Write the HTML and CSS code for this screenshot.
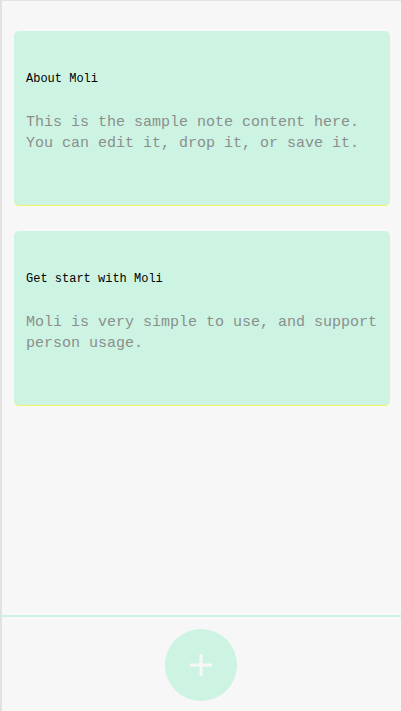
FILE: index.html
```html
<!DOCTYPE html>
<html>
<head>
<meta charset="utf-8">
<link rel="stylesheet" href="styles.css">
</head>
<body>
<div class="app">
  <main class="notes">
    <article class="note">
      <h2 class="note-title">About Moli</h2>
      <p class="note-body">This is the sample note content here. You can edit it, drop it, or save it.</p>
    </article>
    <article class="note">
      <h2 class="note-title">Get start with Moli</h2>
      <p class="note-body">Moli is very simple to use, and support person usage.</p>
    </article>
  </main>
  <footer class="bar">
    <button class="add" aria-label="Add note">
      <svg width="24" height="24" viewBox="0 0 24 24"><path d="M12 1v22M1 12h22" stroke="#f7f7f7" stroke-width="3" fill="none"/></svg>
    </button>
  </footer>
</div>
</body>
</html>
```

FILE: styles.css
```css
html, body {
  margin: 0;
  padding: 0;
  height: 100%;
}
body {
  background: #f7f7f7;
  font-family: "Liberation Mono", "DejaVu Sans Mono", monospace;
}
.app {
  box-sizing: border-box;
  height: 711px;
  border-left: 2px solid #e2e2e2;
  border-top: 1px solid #e2e2e2;
  display: flex;
  flex-direction: column;
}
.notes {
  flex: 1;
  padding: 30px 11px 0 12px;
  display: flex;
  flex-direction: column;
  gap: 25px;
}
.note {
  box-sizing: border-box;
  height: 175px;
  background: #cdf3e3;
  border-radius: 5px;
  border-bottom: 1px solid #ecf562;
  padding: 40px 12px 0 12px;
}
.note-title {
  margin: 0;
  font-size: 12px;
  font-weight: normal;
  line-height: 16px;
  color: #000;
}
.note-body {
  margin: 25px 0 0 0;
  font-size: 15px;
  line-height: 21px;
  color: #8a8f8c;
}
.bar {
  height: 96px;
  border-top: 2px solid #cdf3e3;
  display: flex;
  justify-content: center;
  padding-top: 12px;
  box-sizing: border-box;
  padding-right: 2px;
}
.add {
  width: 72px;
  height: 72px;
  border-radius: 50%;
  border: none;
  background: #cdf3e3;
  display: flex;
  align-items: center;
  justify-content: center;
  padding: 0;
}
```
